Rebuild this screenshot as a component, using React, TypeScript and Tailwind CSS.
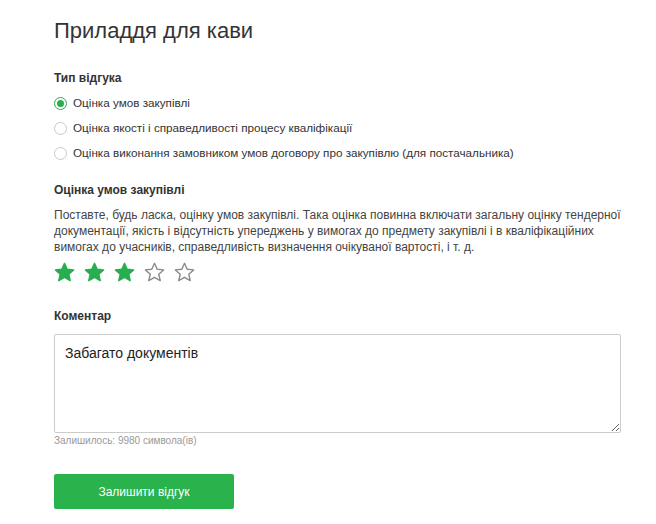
import React, { useState } from "react";

const types = [
    "Оцінка умов закупівлі",
    "Оцінка якості і справедливості процесу кваліфікації",
    "Оцінка виконання замовником умов договору про закупівлю (для постачальника)",
];

const Star = ({ filled }: { filled: boolean }) => (
    <svg width="21" height="20" viewBox="0 0 24 23">
        <path
            d="M12 1.5l3.1 6.9 7.4.7-5.6 5 1.7 7.4L12 17.6l-6.6 3.9 1.7-7.4-5.6-5 7.4-.7z"
            fill={filled ? "#27ae4f" : "#fff"}
            stroke={filled ? "#27ae4f" : "#8a8a8a"}
            strokeWidth="1.6"
            strokeLinejoin="round"
        />
    </svg>
);

export default function App() {
    const [type, setType] = useState(0);
    const [rating, setRating] = useState(3);
    const [comment, setComment] = useState("Забагато документів");

    return (
        <div className="w-[656px] h-[524px] bg-white pl-[54px] pr-[35px] pt-[17px] text-[#333]" style={{ fontFamily: '"Liberation Sans", Arial, sans-serif' }}>
            <h1 className="text-[22px] leading-[28px] text-[#333] font-normal">Приладдя для кави</h1>

            <div className="mt-[25px] text-[12px] font-bold leading-[16px]">Тип відгука</div>
            <div className="mt-[9px] flex flex-col gap-[9px]">
                {types.map((t, i) => (
                    <label key={i} className="flex items-center h-[16px] text-[11.7px] cursor-pointer" onClick={() => setType(i)}>
                        <span className={`w-[13px] h-[13px] rounded-full border flex items-center justify-center bg-white ${type === i ? "border-[#27ae4f]" : "border-[#c8c8c8]"}`}>
                            {type === i && <span className="w-[7px] h-[7px] rounded-full bg-[#27ae4f]" />}
                        </span>
                        <span className="ml-[6px]">{t}</span>
                    </label>
                ))}
            </div>

            <div className="mt-[21px] text-[12px] font-bold leading-[16px]">Оцінка умов закупівлі</div>
            <p className="mt-[9px] text-[12px] leading-[16px] text-[#444]">
                Поставте, будь ласка, оцінку умов закупівлі. Така оцінка повинна включати загальну оцінку тендерної документації, якість і відсутність упереджень у вимогах до предмету закупівлі і в кваліфікаційних вимогах до учасників, справедливість визначення очікуваної вартості, і т. д.
            </p>
            <div className="mt-[7px] flex gap-[9px]">
                {[1, 2, 3, 4, 5].map((n) => (
                    <button key={n} onClick={() => setRating(n)} className="cursor-pointer">
                        <Star filled={n <= rating} />
                    </button>
                ))}
            </div>

            <div className="mt-[26px] text-[12px] font-bold leading-[16px]">Коментар</div>
            <textarea
                value={comment}
                onChange={(e) => setComment(e.target.value)}
                className="mt-[10px] block w-[567px] h-[99px] border border-[#ccc] rounded-[2px] px-[10px] py-[9px] text-[14px] leading-[18px] text-[#222] outline-none resize-y"
            />
            <div className="mt-[2px] text-[10px] leading-[12px] text-[#999]">Залишилось: {9999 - comment.length} символа(ів)</div>

            <button className="mt-[27px] w-[180px] h-[35px] rounded-[2px] bg-[#2ab24d] text-white text-[12px] cursor-pointer">Залишити відгук</button>
        </div>
    );
}
